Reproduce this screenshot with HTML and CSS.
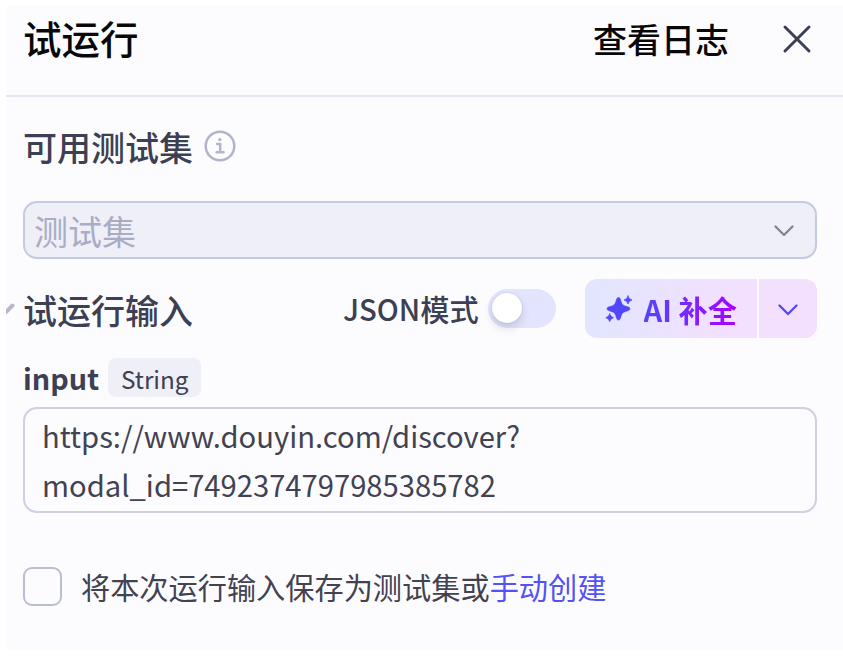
FILE: index.html
```html
<!DOCTYPE html>
<html lang="zh-CN">
<head>
<meta charset="utf-8">
<title>试运行</title>
<link rel="stylesheet" href="styles.css">
</head>
<body>
<main class="panel">
  <header class="header">
    <h1 class="title">试运行</h1>
    <span class="log">查看日志</span>
    <svg class="close" width="30" height="30" viewBox="0 0 30 30"><path d="M3 3 27 27M27 3 3 27"/></svg>
  </header>
  <section class="testset">
    <h2 class="heading">可用测试集</h2>
    <svg class="info" width="32" height="32" viewBox="0 0 32 32"><circle cx="16" cy="16" r="14.3"/><path d="M13.2 14h3v8M12.6 22.3h7"/><circle class="dot" cx="15.8" cy="9.6" r="1.7"/></svg>
  </section>
  <div class="select">
    <span>测试集</span>
    <svg class="chevron" width="22" height="14" viewBox="0 0 22 14"><path d="M2.5 2.5 11 11l8.500-8.500"/></svg>
  </div>
  <section class="toolbar">
    <svg class="collapse" width="9" height="13" viewBox="0 0 9 13"><path d="M-2 10 0 10 6.500 3.500"/></svg>
    <h2 class="heading">试运行输入</h2>
    <span class="json">JSON模式</span>
    <span class="switch"><span class="knob"></span></span>
    <div class="ai">
      <div class="ai-main">
        <svg class="spark" width="28" height="28" viewBox="0 0 28 28"><path class="large" d="M13.500 2.500c1.200 0 1.700.8 2.200 2.500 1.300 4.700 2 5.400 6.600 6.600 1.800.5 2.700 1 2.700 2.200s-.9 1.700-2.700 2.200c-4.600 1.200-5.300 2-6.600 6.600-.5 1.700-1 2.500-2.200 2.500s-1.700-.8-2.200-2.500C10 18 9.300 17.200 4.700 16 2.900 15.500 2 15 2 13.800s.9-1.700 2.700-2.200C9.300 10.400 10 9.700 11.300 5c.5-1.700 1-2.500 2.200-2.500Z"/><path class="small" d="M23 1q.7 3.200 4 4-3.300.8-4 4-.7-3.200-4-4 3.300-.8 4-4ZM4.700 19q.7 3 3.800 3.700-3.100.8-3.800 3.800-.7-3-3.800-3.800 3.100-.7 3.800-3.700Z"/></svg>
        <span class="ai-text">AI 补全</span>
      </div>
      <div class="ai-more"><svg class="chevron" width="22" height="14" viewBox="0 0 22 14"><path d="M2.500 2.500 11 11l8.500-8.500"/></svg></div>
    </div>
  </section>
  <div class="field-label">
    <strong class="name">input</strong>
    <span class="tag">String</span>
  </div>
  <div class="textbox">https://www.douyin.com/discover?<br>modal_id=7492374797985385782</div>
  <div class="save">
    <span class="checkbox"></span>
    <span class="save-text">将本次运行输入保存为测试集或<a class="link">手动创建</a></span>
  </div>
</main>
</body>
</html>
```
FILE: styles.css
```css
* { box-sizing: border-box; }
body {
  margin: 0;
  padding: 5px 0 0 6px;
  background: #fff;
  color: #3c4052;
  font-family: "Noto Sans CJK SC", sans-serif;
}
svg { display: block; flex: none; fill: none; stroke-linecap: round; stroke-linejoin: round; }
h1, h2 { margin: 0; font-weight: 500; }
.panel { height: 645px; background: #fcfcff; white-space: nowrap; }
.header {
  display: flex;
  align-items: center;
  height: 92px;
  padding: 0 31px 23px 17px;
  border-bottom: 2px solid #e3e7f1;
  color: #080808;
}
.title { margin-top: -4px; font-size: 38.5px; line-height: 60px; }
.log { margin-left: auto; font-size: 34px; font-weight: 500; line-height: 60px; }
.close { margin-left: 53px; stroke: #3c4052; stroke-width: 3; }
.testset { display: flex; align-items: center; height: 104px; padding: 0 0 2px 17px; }
.heading { margin-top: -2px; font-size: 34px; line-height: 50px; }
.info { margin: -4px 0 0 11px; stroke: #b1b5cb; stroke-width: 2.5; }
.info .dot { fill: #b1b5cb; stroke: none; }
.select {
  display: flex;
  align-items: center;
  justify-content: space-between;
  width: 794px;
  height: 58px;
  margin-left: 17px;
  padding: 2px 20px 0 9px;
  border: 2px solid #c4cadf;
  border-radius: 14px;
  background: #efeff8;
  color: #a8adc4;
  font-size: 34px;
  line-height: 50px;
}
.chevron { stroke: #84848e; stroke-width: 2.3; }
.toolbar { display: flex; align-items: center; height: 59px; margin-top: 20px; }
.collapse { width: 9px; margin-right: 8px; stroke: #b5b9cb; stroke-width: 4; }
.toolbar .heading { margin-top: 2px; }
.json { margin: -2px 0 0 150px; font-size: 29.2px; font-weight: 500; }
.switch { flex: none; width: 68px; height: 39px; margin-left: 9px; padding: 4px; border-radius: 20px; background: #e3e4fd; }
.knob { display: block; width: 30px; height: 30px; border-radius: 50%; background: #fff; box-shadow: 0 5px 10px rgba(30, 30, 60, .16), 0 0 2px rgba(30, 30, 60, .15); }
.ai { display: flex; gap: 2px; width: 232px; height: 59px; margin-left: 29px; overflow: hidden; border-radius: 12px; }
.ai-main { display: flex; align-items: center; width: 172px; padding-left: 20px; background: linear-gradient(100deg, #e1e6ff, #f3e0ff 85%); }
.spark { fill: #5147ff; }
.spark .large { stroke: #5147ff; stroke-width: .5; }
.spark .small { stroke: #5147ff; stroke-width: .8; }
.ai-text { margin-left: 11px; background: linear-gradient(90deg, #5147ff, #a800ff); background-clip: text; -webkit-background-clip: text; color: transparent; font-size: 29.2px; font-weight: 700; }
.ai-more { display: flex; align-items: center; justify-content: center; flex: 1; padding-top: 2px; background: #f3e0ff; }
.ai-more .chevron { stroke: #5147ff; }
.field-label { display: flex; align-items: center; height: 39px; margin-top: 20px; padding-left: 17px; }
.name { font-size: 28.8px; font-weight: 700; line-height: 40px; }
.tag { width: 93px; height: 39px; margin-left: 9px; border-radius: 8px; background: #efeff8; font-size: 24.3px; line-height: 41px; text-align: center; }
.textbox { width: 794px; height: 106px; margin: 10px 0 0 17px; padding: 2px 17px; border: 2px solid #cdd1e2; border-radius: 14px; color: #424251; font-size: 29.2px; line-height: 48.5px; }
.save { display: flex; align-items: center; height: 40px; margin-top: 54px; padding-left: 17px; color: #424251; font-size: 29.2px; line-height: 40px; }
.checkbox { width: 39px; height: 39px; margin: -2px 19px 0 0; border: 2px solid #babed1; border-radius: 9px; }
.save-text { margin-top: -2px; }
.link { color: #5352f5; }
```
